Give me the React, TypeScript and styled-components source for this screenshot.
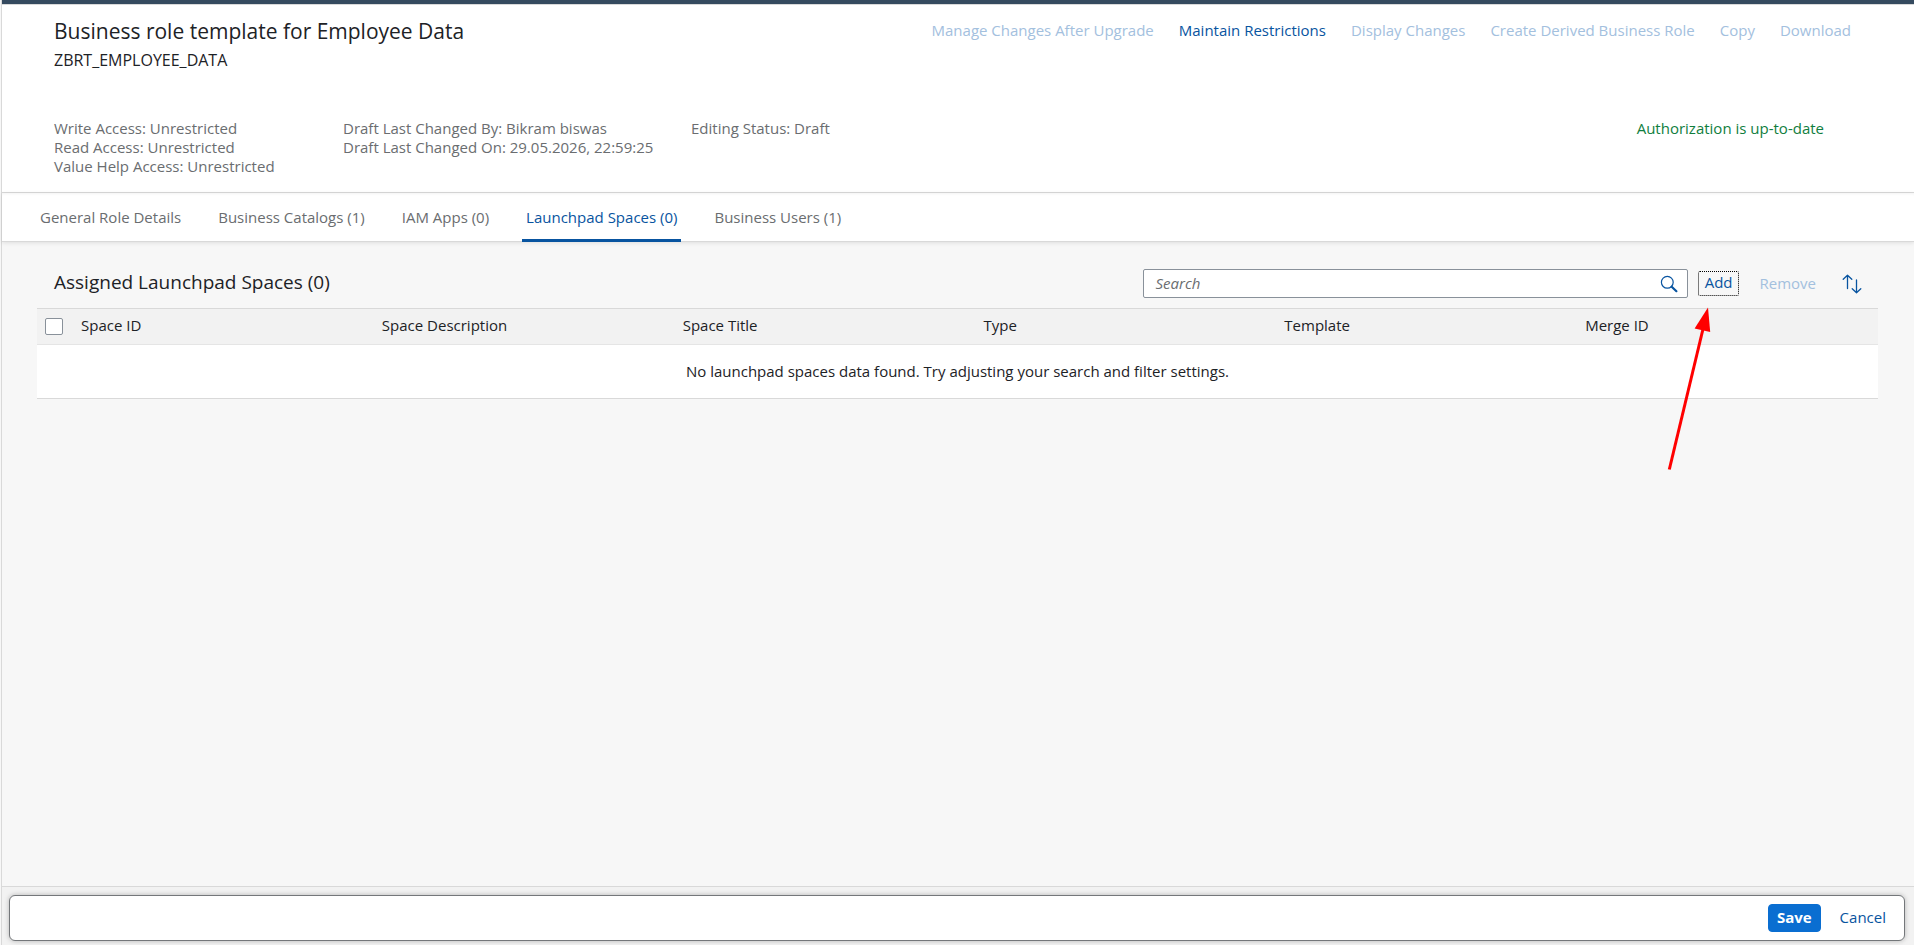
import React from 'react';
import styled, { createGlobalStyle, css } from 'styled-components';

const GlobalStyle = createGlobalStyle`
  * { box-sizing: border-box; }
  body {
    margin: 0;
    background: #f7f7f7;
    color: #1d2226;
    font-family: 'Open Sans', 'Noto Sans', sans-serif;
    font-size: 15px;
    line-height: 20px;
  }
  button, input { font: inherit; }
`;

const Page = styled.div`
  display: flex;
  flex-direction: column;
  min-height: 100vh;
  margin-left: 1px;
  border-left: 1px solid #d9d9d9;
`;

const ShellBar = styled.div`
  height: 5px;
  background: #354a5f;
  border-bottom: 1px solid #d9d9d9;
`;

const ObjectHeader = styled.header`
  padding: 12px 53px 16px 52px;
  background: #fff;
  border-bottom: 1px solid #d9d9d9;
`;

const TitleRow = styled.div`
  display: flex;
  justify-content: space-between;
  align-items: flex-start;
`;

const Title = styled.h1`
  margin: 0;
  font-size: 21px;
  line-height: 28px;
  font-weight: 400;
`;

const Subtitle = styled.p`
  margin: 5px 0 0;
  font-size: 16px;
`;

const Actions = styled.div`
  display: flex;
  gap: 5px;
`;

const TextButton = styled.button`
  height: 28px;
  padding: 0 9px 2px;
  border: 1px solid transparent;
  border-radius: 4px;
  background: transparent;
  color: #0854a0;
  line-height: 24px;
  white-space: nowrap;
  &:disabled { color: #a3c0de; }
`;

const Facets = styled.div`
  display: grid;
  grid-template-columns: 289px 348px 1fr auto;
  margin-top: 49px;
  padding-right: 37px;
  color: #6a6d70;
  line-height: 19px;
`;

const Facet = styled.div<{ $positive?: boolean }>`
  display: flex;
  flex-direction: column;
  ${p => p.$positive && css`color: #107e3e;`}
`;

const TabBar = styled.nav`
  display: flex;
  gap: 29px;
  height: 49px;
  padding: 0 34px;
  background: #fff;
  border-bottom: 1px solid #d9d9d9;
  box-shadow: 0 1px 4px rgba(0, 0, 0, 0.1), inset 0 3px 3px -2px rgba(0, 0, 0, 0.05);
`;

const Tab = styled.a<{ $active?: boolean }>`
  height: 49px;
  padding: 0 4px;
  line-height: 48px;
  text-decoration: none;
  white-space: nowrap;
  color: ${p => (p.$active ? '#0854a0' : '#6a6d70')};
  border-bottom: 3px solid ${p => (p.$active ? '#0854a0' : 'transparent')};
`;

const Content = styled.main`
  flex: 1;
  padding: 27px 36px 24px 35px;
`;

const Toolbar = styled.div`
  display: flex;
  align-items: center;
  gap: 10px;
  padding: 0 10px 10px 17px;
`;

const SectionTitle = styled.h2`
  flex: 1;
  margin: 0;
  padding-bottom: 2px;
  font-size: 19px;
  line-height: 27px;
  font-weight: 400;
`;

const SearchBox = styled.form`
  display: flex;
  align-items: center;
  width: 30%;
  height: 29px;
  padding-right: 8px;
  background: #fff;
  border: 1px solid #89919a;
  border-radius: 2px;
`;

const SearchInput = styled.input`
  flex: 1;
  min-width: 0;
  height: 27px;
  padding: 0 11px 2px;
  border: 0;
  outline: 0;
  background: transparent;
  &::placeholder { color: #6a6d70; font-style: italic; opacity: 1; }
`;

const IconButton = styled.button`
  display: flex;
  align-items: center;
  justify-content: center;
  width: 20px;
  height: 26px;
  padding: 0;
  border: 0;
  background: transparent;
  color: #0854a0;
`;

const AddAnchor = styled.div`
  position: relative;
  display: flex;
`;

const AddButton = styled(TextButton)`
  height: 25px;
  padding: 0 6px 2px;
  border: 1px dotted #000;
  border-radius: 2px;
  line-height: 21px;
`;

const Pointer = styled.svg`
  position: absolute;
  left: -35px;
  top: 33px;
  pointer-events: none;
`;

const SortButton = styled(IconButton)`
  margin: 0 6px;
`;

const Table = styled.table`
  width: 100%;
  table-layout: fixed;
  border-collapse: separate;
  border-spacing: 0;
`;

const HeadCell = styled.th<{ $select?: boolean }>`
  width: ${p => (p.$select ? '36px' : 'auto')};
  height: 37px;
  padding: 0 8px 3px;
  text-align: left;
  font-weight: 400;
  background: #f2f2f2;
  border-top: 1px solid #d9d9d9;
  border-bottom: 1px solid #e5e5e5;
`;

const CheckBox = styled.input`
  appearance: none;
  display: block;
  width: 18px;
  height: 17px;
  margin: 3px 0 0;
  background: #fff;
  border: 1px solid #89919a;
  border-radius: 2px;
`;

const EmptyCell = styled.td`
  height: 54px;
  padding: 0 8px 2px;
  text-align: center;
  background: #fff;
  border-bottom: 1px solid #d9d9d9;
`;

const FooterArea = styled.footer`
  padding: 8px 9px 4px 7px;
  background: #f2f2f2;
  border-top: 1px solid #d9d9d9;
`;

const FooterBar = styled.div`
  display: flex;
  align-items: center;
  justify-content: flex-end;
  gap: 9px;
  height: 46px;
  padding: 0 8px;
  background: #fff;
  border: 1px solid #74777a;
  border-radius: 6px;
  box-shadow: 0 0 5px rgba(0, 0, 0, 0.25);
`;

const SaveButton = styled(TextButton)`
  padding: 0 8px 2px;
  background: #0a6ed1;
  border-color: #0a6ed1;
  color: #fff;
  font-weight: 700;
`;

const actions = [
  { label: 'Manage Changes After Upgrade' },
  { label: 'Maintain Restrictions', enabled: true },
  { label: 'Display Changes' },
  { label: 'Create Derived Business Role' },
  { label: 'Copy' },
  { label: 'Download' },
];

const facets = [
  ['Write Access: Unrestricted', 'Read Access: Unrestricted', 'Value Help Access: Unrestricted'],
  ['Draft Last Changed By: Bikram biswas', 'Draft Last Changed On: 29.05.2026, 22:59:25'],
  ['Editing Status: Draft'],
];

const tabs = [
  'General Role Details',
  'Business Catalogs (1)',
  'IAM Apps (0)',
  'Launchpad Spaces (0)',
  'Business Users (1)',
];

const columns = ['Space ID', 'Space Description', 'Space Title', 'Type', 'Template', 'Merge ID'];

export default function App() {
  return (
    <>
      <GlobalStyle />
      <Page>
        <ShellBar />
        <ObjectHeader>
          <TitleRow>
            <div>
              <Title>Business role template for Employee Data</Title>
              <Subtitle>ZBRT_EMPLOYEE_DATA</Subtitle>
            </div>
            <Actions>
              {actions.map(a => (
                <TextButton key={a.label} type="button" disabled={!a.enabled}>{a.label}</TextButton>
              ))}
            </Actions>
          </TitleRow>
          <Facets>
            {facets.map(lines => (
              <Facet key={lines[0]}>
                {lines.map(line => <span key={line}>{line}</span>)}
              </Facet>
            ))}
            <Facet $positive>Authorization is up-to-date</Facet>
          </Facets>
        </ObjectHeader>
        <TabBar>
          {tabs.map((tab, i) => (
            <Tab key={tab} href="#" $active={i === 3}>{tab}</Tab>
          ))}
        </TabBar>
        <Content>
          <Toolbar>
            <SectionTitle>Assigned Launchpad Spaces (0)</SectionTitle>
            <SearchBox role="search">
              <SearchInput type="text" placeholder="Search" aria-label="Search" />
              <IconButton type="button" aria-label="Start search">
                <svg width="18" height="18" viewBox="0 0 18 18" fill="none" stroke="currentColor">
                  <circle cx="7.3" cy="7.3" r="5.9" strokeWidth="1.2" />
                  <path d="M11.7 11.7L16.4 16.2" strokeWidth="2.2" strokeLinecap="round" />
                </svg>
              </IconButton>
            </SearchBox>
            <AddAnchor>
              <AddButton type="button">Add</AddButton>
              <Pointer width="56" height="168" viewBox="0 0 56 168" aria-hidden="true">
                <path d="M6.3 165.5L40 25" stroke="#f00" strokeWidth="3" fill="none" />
                <path d="M45 3.5L31.6 24.5L47.2 28Z" fill="#f00" />
              </Pointer>
            </AddAnchor>
            <TextButton type="button" disabled>Remove</TextButton>
            <SortButton type="button" aria-label="Sort">
              <svg width="20" height="20" viewBox="0 0 20 20" fill="none" stroke="currentColor" strokeWidth="1.3" strokeLinecap="round" strokeLinejoin="round">
                <path d="M5.5 14.5V1.5M1.2 5.2L5.5 1.2L9.8 5.2" />
                <path d="M14.5 6V18.5M10.2 14.8L14.5 18.8L18.8 14.8" />
              </svg>
            </SortButton>
          </Toolbar>
          <Table>
            <thead>
              <tr>
                <HeadCell $select><CheckBox type="checkbox" aria-label="Select all" /></HeadCell>
                {columns.map(c => <HeadCell key={c} scope="col">{c}</HeadCell>)}
              </tr>
            </thead>
            <tbody>
              <tr>
                <EmptyCell colSpan={7}>
                  No launchpad spaces data found. Try adjusting your search and filter settings.
                </EmptyCell>
              </tr>
            </tbody>
          </Table>
        </Content>
        <FooterArea>
          <FooterBar>
            <SaveButton type="button">Save</SaveButton>
            <TextButton type="button">Cancel</TextButton>
          </FooterBar>
        </FooterArea>
      </Page>
    </>
  );
}
